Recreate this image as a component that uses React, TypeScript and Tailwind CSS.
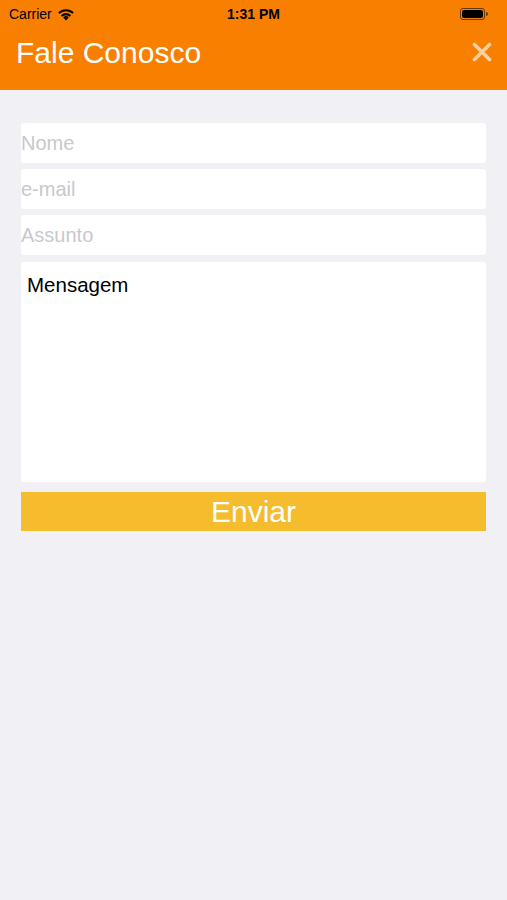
import React from "react";

export default function App() {
  const font = { fontFamily: '"Liberation Sans", Arial, sans-serif' };
  return (
    <div className="w-[507px] h-[900px] bg-[#f0f0f5] flex flex-col" style={font}>
      <div className="bg-[#f97f00] h-[90px] flex flex-col">
        <div className="h-[28px] flex items-center px-[9px] relative">
          <div className="flex items-center gap-[5px] text-[14px] text-black">
            <span>Carrier</span>
            <svg width="18" height="13" viewBox="0 0 18 13">
              <path d="M9 12.5 L6.2 9.4 A4 4 0 0 1 11.8 9.4 Z" fill="#000" />
              <path d="M3.9 7.2 A7.3 7.3 0 0 1 14.1 7.2 L12.7 8.7 A5.3 5.3 0 0 0 5.3 8.7 Z" fill="#000" />
              <path d="M1.2 4.3 A11.3 11.3 0 0 1 16.8 4.3 L15.4 5.8 A9.3 9.3 0 0 0 2.6 5.8 Z" fill="#000" />
            </svg>
          </div>
          <div className="absolute left-0 right-0 text-center text-[14px] font-bold text-black">1:31 PM</div>
          <div className="ml-auto mr-[10px] flex items-center">
            <div className="w-[25px] h-[12px] rounded-[3px] border border-[#6b3a00] p-[1px]">
              <div className="w-full h-full bg-black rounded-[2px]" />
            </div>
            <div className="w-[2px] h-[4px] bg-[#6b3a00] rounded-r-sm ml-[1px]" />
          </div>
        </div>
        <div className="flex-1 flex items-center pl-[16px] pr-[15px] pb-[14px]">
          <span className="text-white text-[30px]">Fale Conosco</span>
          <svg className="ml-auto" width="20" height="20" viewBox="0 0 20 20">
            <path d="M2.5 2.5 L17.5 17.5 M17.5 2.5 L2.5 17.5" stroke="#fcd0a0" strokeWidth="3.6" strokeLinecap="round" />
          </svg>
        </div>
      </div>
      <div className="px-[21px] pt-[33px] flex flex-col">
        <div className="flex flex-col gap-[6px]">
          {["Nome", "e-mail", "Assunto"].map((p) => (
            <div key={p} className="h-[40px] bg-white rounded-[3px] flex items-center text-[20px] text-[#c8c8ce]">
              {p}
            </div>
          ))}
          <div className="h-[220px] bg-white rounded-[3px] mt-[1px] pl-[6px] pt-[8px] text-[20.5px] text-black">
            Mensagem
          </div>
        </div>
        <div className="mt-[10px] h-[39px] bg-[#f5bc2d] flex items-center justify-center text-white text-[30px]">
          Enviar
        </div>
      </div>
    </div>
  );
}
